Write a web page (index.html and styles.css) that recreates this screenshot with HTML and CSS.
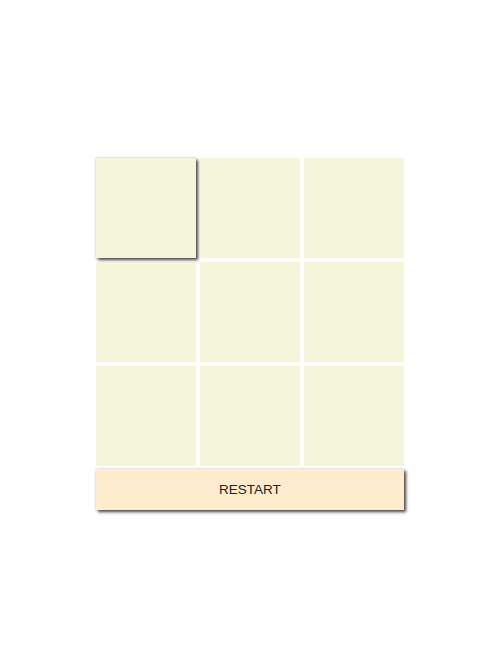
FILE: index.html
```html
<!DOCTYPE html>
<html>
<head>
<meta charset="utf-8">
<link rel="stylesheet" href="styles.css">
</head>
<body>
<main class="game">
  <div class="board">
    <div class="cell active"></div>
    <div class="cell"></div>
    <div class="cell"></div>
    <div class="cell"></div>
    <div class="cell"></div>
    <div class="cell"></div>
    <div class="cell"></div>
    <div class="cell"></div>
    <div class="cell"></div>
  </div>
  <button class="restart">RESTART</button>
</main>
</body>
</html>
```
FILE: styles.css
```css
html, body {
  margin: 0;
  padding: 0;
  background: #ffffff;
}
body {
  min-height: 666px;
  display: flex;
  justify-content: center;
  align-items: flex-start;
  font-family: "Liberation Sans", Arial, sans-serif;
}
.game {
  margin-top: 158px;
  margin-left: 1px;
  width: 308px;
  display: flex;
  flex-direction: column;
  gap: 3px;
}
.board {
  display: grid;
  grid-template-columns: repeat(3, 100px);
  grid-template-rows: repeat(3, 100px);
  gap: 4px;
}
.cell {
  background: #f5f5dc;
}
.cell.active {
  box-shadow: 2px 2px 3px #444, 0 0 2px rgba(0,0,0,0.25);
}
.restart {
  height: 41px;
  width: 308px;
  border: none;
  background: #ffebcd;
  font-family: "Liberation Sans", Arial, sans-serif;
  font-size: 13.5px;
  color: #222;
  box-shadow: 2px 2px 3px #444, 0 0 2px rgba(0,0,0,0.2);
  padding: 0 0 1px 0;
}
```
